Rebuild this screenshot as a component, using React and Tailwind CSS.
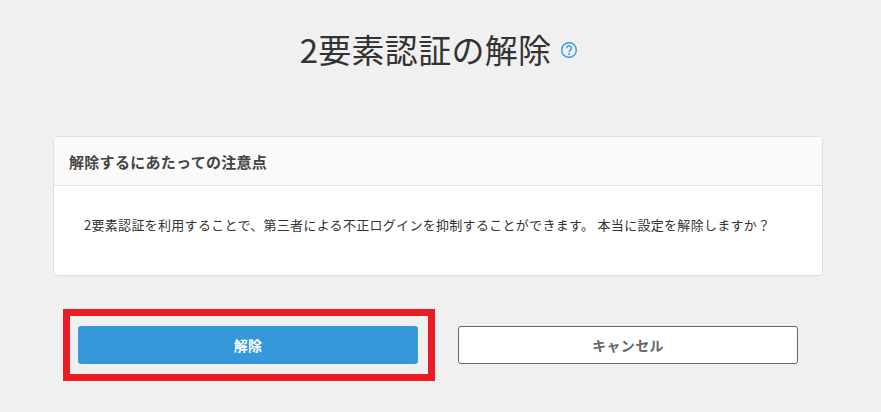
export default function App() {
  return (
    <div className="min-h-[412px] bg-[#f0f0f0] pl-[53px] pr-[58px] pt-[23px] text-[#333] tracking-[0.3px] font-['Noto_Sans_CJK_JP','Noto_Sans',sans-serif] overflow-hidden">
      <div className="flex h-[52px] items-center justify-center pl-[2px]">
        <h1 className="text-[33px] leading-[52px] font-normal text-[#333]">2要素認証の解除</h1>
        <svg className="ml-[9px] mt-[2px]" width="18" height="18" viewBox="0 0 18 18" fill="none" stroke="#3498db">
          <circle cx="9" cy="9" r="7.3" strokeWidth="1.4" />
          <path d="M6.6 7.2a2.4 2.4 0 1 1 3.7 2c-.8.5-1.3 1-1.3 1.9" strokeWidth="1.4" />
          <circle cx="9" cy="13" r=".9" fill="#3498db" stroke="none" />
        </svg>
      </div>
      <section className="mt-[61px] h-[140px] rounded-[4px] border border-[#e0e0e0] bg-white overflow-hidden">
        <h2 className="h-[49px] border-b border-[#e0e0e0] bg-[#fafafa] pl-[15px] text-[15px] leading-[50px] font-bold text-[#444]">解除するにあたっての注意点</h2>
        <p className="pl-[30px] pt-[29px] text-[13px] leading-[20px] text-[#333]">2要素認証を利用することで、第三者による不正ログインを抑制することができます。 本当に設定を解除しますか？</p>
      </section>
      <div className="relative mt-[50px] ml-[25px] flex w-[720px] justify-between">
        <button className="h-[38px] w-[340px] rounded-[3px] bg-[#3498db] text-[14px] font-bold text-white">解除</button>
        <button className="h-[38px] w-[340px] rounded-[3px] border border-[#666] bg-white text-[14px] font-bold text-[#666]">キャンセル</button>
        <div className="absolute left-[-15px] top-[-17px] h-[72px] w-[372px] border-[7px] border-[#ed1c24]" />
      </div>
    </div>
  );
}
